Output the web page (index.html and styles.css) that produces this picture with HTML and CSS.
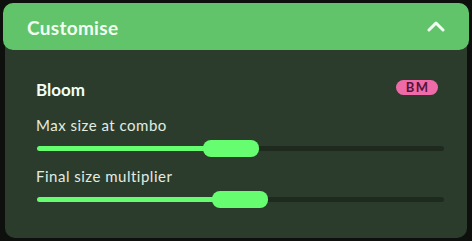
FILE: index.html
```html
<!DOCTYPE html>
<html>
<head>
<meta charset="utf-8">
<link rel="stylesheet" href="styles.css">
</head>
<body>
<div class="panel">
  <div class="header">
    <span class="title">Customise</span>
    <svg class="chevron" width="18" height="12" viewBox="0 0 18 12"><path d="M2 10 L9 3 L16 10" fill="none" stroke="#f2fff2" stroke-width="3" stroke-linecap="round" stroke-linejoin="round"/></svg>
  </div>
  <div class="content">
    <div class="mod-row">
      <span class="mod-name">Bloom</span>
      <span class="badge">BM</span>
    </div>
    <div class="label">Max size at combo</div>
    <div class="slider">
      <div class="fill" style="width:168px"></div>
      <div class="thumb"></div>
      <div class="rest"></div>
    </div>
    <div class="label">Final size multiplier</div>
    <div class="slider">
      <div class="fill" style="width:177px"></div>
      <div class="thumb"></div>
      <div class="rest"></div>
    </div>
  </div>
</div>
</body>
</html>
```
FILE: styles.css
```css
html, body {
  margin: 0;
  padding: 0;
  background: #0e100e;
  width: 472px;
  height: 241px;
  overflow: hidden;
}
body {
  font-family: "Lato", "Noto Sans", sans-serif;
  padding-top: 3px;
  padding-left: 5px;
  box-sizing: border-box;
}
.panel {
  width: 462px;
  height: 235px;
  background: #2c3c2c;
  border-radius: 10px;
  display: flex;
  flex-direction: column;
}
.header {
  margin: 0 -2px;
  height: 47px;
  background: #61c46b;
  border-radius: 10px;
  display: flex;
  align-items: center;
  justify-content: space-between;
  padding: 0 24px 0 24px;
  flex-shrink: 0;
}
.title {
  color: #f2fff2;
  font-size: 19px;
  font-weight: 700;
  letter-spacing: 0.3px;
  margin-top: 1px;
}
.chevron {
  display: block;
  margin-top: -1px;
}
.content {
  padding: 29px 23px 0 31px;
  display: flex;
  flex-direction: column;
}
.mod-row {
  height: 20px;
  display: flex;
  align-items: center;
  justify-content: space-between;
}
.mod-name {
  color: #f2fff2;
  font-size: 17px;
  font-weight: 700;
}
.badge {
  margin-right: 6px;
  margin-top: -4px;
  height: 15px;
  width: 42px;
  border-radius: 8px;
  background: #ee6aa9;
  color: #561535;
  font-family: "Lato", sans-serif;
  font-size: 13px;
  font-weight: 700;
  letter-spacing: 1.5px;
  text-indent: 1.5px;
  display: flex;
  align-items: center;
  justify-content: center;
  line-height: 15px;
}
.label {
  margin-top: 17px;
  height: 18px;
  line-height: 18px;
  color: #e2ece2;
  font-size: 15px;
  letter-spacing: 0.5px;
}
.label + .slider {
  margin-top: 4px;
  margin-left: 1px;
}
.slider {
  height: 20px;
  display: flex;
  align-items: center;
}
.slider + .label {
  margin-top: 9px;
}
.fill {
  height: 5px;
  background: #66fd71;
  border-radius: 3px 0 0 3px;
}
.thumb {
  width: 56px;
  height: 17px;
  border-radius: 8px;
  background: #66fd71;
  margin-left: -2px;
  flex-shrink: 0;
}
.rest {
  flex: 1;
  height: 5px;
  background: #1f2a1f;
  border-radius: 0 3px 3px 0;
}
```
